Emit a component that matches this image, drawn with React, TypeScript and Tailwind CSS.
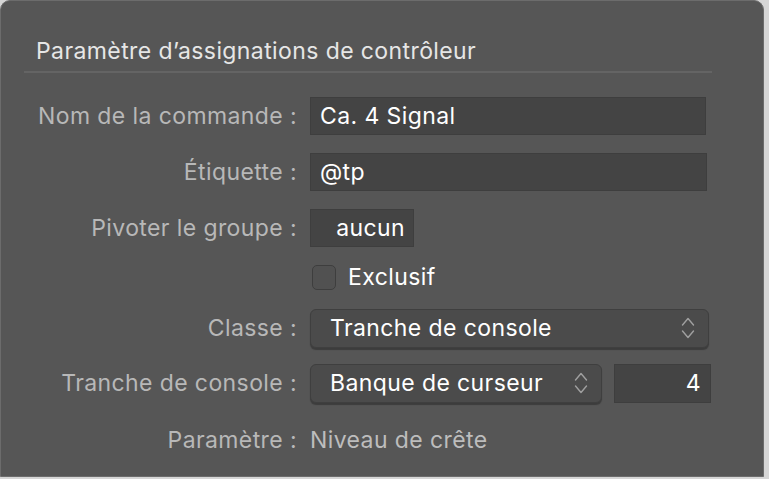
import React from 'react';

const font = { fontFamily: 'Inter, "Noto Sans", sans-serif' };

function Chevrons() {
  return (
    <svg width="14" height="24" viewBox="0 0 14 24" fill="none" stroke="#a0a0a0" strokeWidth="1.4" strokeLinecap="round" strokeLinejoin="round">
      <path d="M1.5 9 L7 2.5 L12.5 9" />
      <path d="M1.5 15 L7 21.5 L12.5 15" />
    </svg>
  );
}

function Row({ label, children, className = '' }: { label: string; children: React.ReactNode; className?: string }) {
  return (
    <div className={`flex items-center ${className}`}>
      <div className="w-[297px] shrink-0 text-right text-[23px] tracking-[0.4px] text-[#b8b8b8] pr-[1px]">{label}</div>
      <div className="ml-[12px] flex items-center">{children}</div>
    </div>
  );
}

export default function App() {
  return (
    <div className="w-[769px] h-[479px] bg-[#d6d6d6] overflow-hidden tracking-[0.4px]" style={font}>
      <div className="w-[764px] h-[477px] bg-[#565656] border border-[#6c6c6c] rounded-t-[10px] pt-[36px]">
        <div className="mx-[23px] w-[688px] border-b-2 border-[#646464] pb-[5px] pl-[12px]">
          <div className="text-[23px] leading-[29px] text-[#e6e6e6]">Paramètre d’assignations de contrôleur</div>
        </div>

        <div className="flex flex-col">
          <Row label="Nom de la commande :" className="mt-[24px]">
            <div className="w-[396px] h-[38px] bg-[#444444] border border-[#3e3e3e] flex items-center pl-[9px] text-[23px] text-white">
              Ca. 4 Signal
            </div>
          </Row>
          <Row label="Étiquette :" className="mt-[18px]">
            <div className="w-[397px] h-[38px] bg-[#444444] border border-[#3e3e3e] flex items-center pl-[9px] text-[23px] text-white">
              @tp
            </div>
          </Row>
          <Row label="Pivoter le groupe :" className="mt-[18px]">
            <div className="w-[104px] h-[38px] bg-[#444444] border border-[#3e3e3e] flex items-center justify-end pr-[8px] text-[23px] text-white">
              aucun
            </div>
          </Row>
          <Row label="" className="mt-[13px]">
            <div className="flex items-center">
              <div className="w-[24px] h-[25px] rounded-[5px] bg-[#515151] border border-[#3e3e3e] ml-[2px]" />
              <span className="ml-[12px] text-[23px] text-white">Exclusif</span>
            </div>
          </Row>
          <Row label="Classe :" className="mt-[14px]">
            <div className="w-[399px] h-[39px] rounded-[6px] bg-[#4b4b4b] border border-[#3f3f3f] shadow-[0_2px_1px_rgba(0,0,0,0.3)] flex items-center justify-between pl-[19px] pr-[13px] text-[23px] text-white">
              <span>Tranche de console</span>
              <Chevrons />
            </div>
          </Row>
          <Row label="Tranche de console :" className="mt-[16px]">
            <div className="w-[292px] h-[39px] rounded-[6px] bg-[#4b4b4b] border border-[#3f3f3f] shadow-[0_2px_1px_rgba(0,0,0,0.3)] flex items-center justify-between pl-[19px] pr-[13px] text-[23px] text-white">
              <span>Banque de curseur</span>
              <Chevrons />
            </div>
            <div className="ml-[12px] w-[97px] h-[39px] bg-[#444444] border border-[#3e3e3e] flex items-center justify-end pr-[9px] text-[23px] text-white">
              4
            </div>
          </Row>
          <Row label="Paramètre :" className="mt-[20px]">
            <span className="text-[23px] text-[#bdbdbd]">Niveau de crête</span>
          </Row>
        </div>
      </div>
    </div>
  );
}
